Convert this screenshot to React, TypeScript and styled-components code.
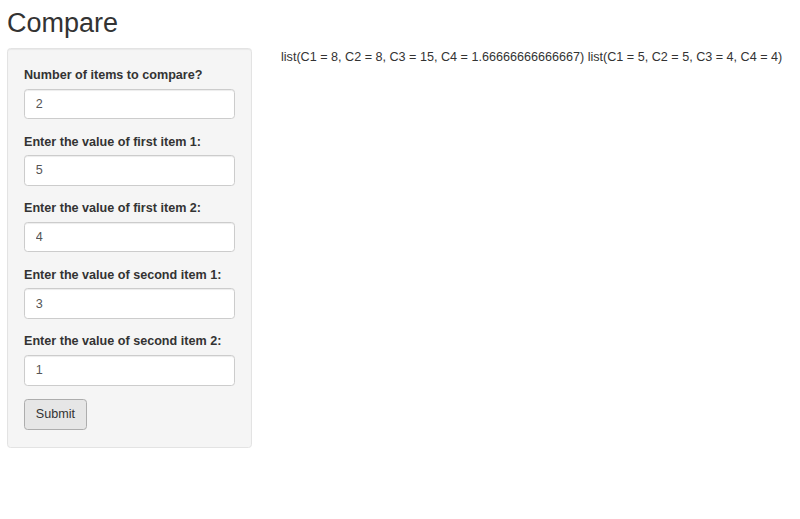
import React from "react";
import styled, { createGlobalStyle } from "styled-components";

const GlobalStyle = createGlobalStyle`
  html, body {
    margin: 0;
    padding: 0;
    background: #fff;
  }
  body {
    font-family: "Liberation Sans", Arial, Helvetica, sans-serif;
    font-size: 12.6px;
    line-height: 18px;
    color: #333;
  }
  * {
    box-sizing: border-box;
  }
`;

const Page = styled.div`
  padding: 0 7px;
`;

const Title = styled.h2`
  margin: 9.3px 0 9px;
  font-size: 27px;
  font-weight: 500;
  line-height: 1.1;
  color: #333;
`;

const Row = styled.div`
  display: grid;
  grid-template-columns: 245px 1fr;
  column-gap: 29px;
  align-items: start;
`;

const Well = styled.form`
  background: #f5f5f5;
  border: 1px solid #e3e3e3;
  border-radius: 3.6px;
  box-shadow: inset 0 1px 1px rgba(0, 0, 0, 0.05);
  padding: 17.1px 16px;
`;

const FormGroup = styled.div`
  margin-bottom: 13.5px;
`;

const Label = styled.label`
  display: block;
  margin-bottom: 4.5px;
  font-weight: bold;
  line-height: 18px;
`;

const Input = styled.input`
  display: block;
  width: 100%;
  height: 30.6px;
  padding: 5.4px 10.8px;
  font-family: inherit;
  font-size: 12.6px;
  line-height: 18px;
  color: #555;
  background: #fff;
  border: 1px solid #ccc;
  border-radius: 3.6px;
  box-shadow: inset 0 1px 1px rgba(0, 0, 0, 0.075);
  outline: none;
`;

const Button = styled.button`
  display: inline-block;
  height: 30.6px;
  padding: 5.4px 10.8px;
  font-family: inherit;
  font-size: 12.6px;
  line-height: 18px;
  color: #333;
  background: #e6e6e6;
  border: 1px solid #adadad;
  border-radius: 3.6px;
  cursor: pointer;
`;

const Output = styled.div`
  white-space: nowrap;
  line-height: 18px;
`;

const fields = [
  { label: "Number of items to compare?", value: "2" },
  { label: "Enter the value of first item 1:", value: "5" },
  { label: "Enter the value of first item 2:", value: "4" },
  { label: "Enter the value of second item 1:", value: "3" },
  { label: "Enter the value of second item 2:", value: "1" },
];

export default function App() {
  return (
    <>
      <GlobalStyle />
      <Page>
        <Title>Compare</Title>
        <Row>
          <Well onSubmit={(e) => e.preventDefault()}>
            {fields.map((f, i) => (
              <FormGroup key={i}>
                <Label htmlFor={`field-${i}`}>{f.label}</Label>
                <Input id={`field-${i}`} type="number" defaultValue={f.value} />
              </FormGroup>
            ))}
            <Button type="submit">Submit</Button>
          </Well>
          <Output>
            list(C1 = 8, C2 = 8, C3 = 15, C4 = 1.66666666666667) list(C1 = 5, C2 = 5, C3 = 4, C4 = 4)
          </Output>
        </Row>
      </Page>
    </>
  );
}
